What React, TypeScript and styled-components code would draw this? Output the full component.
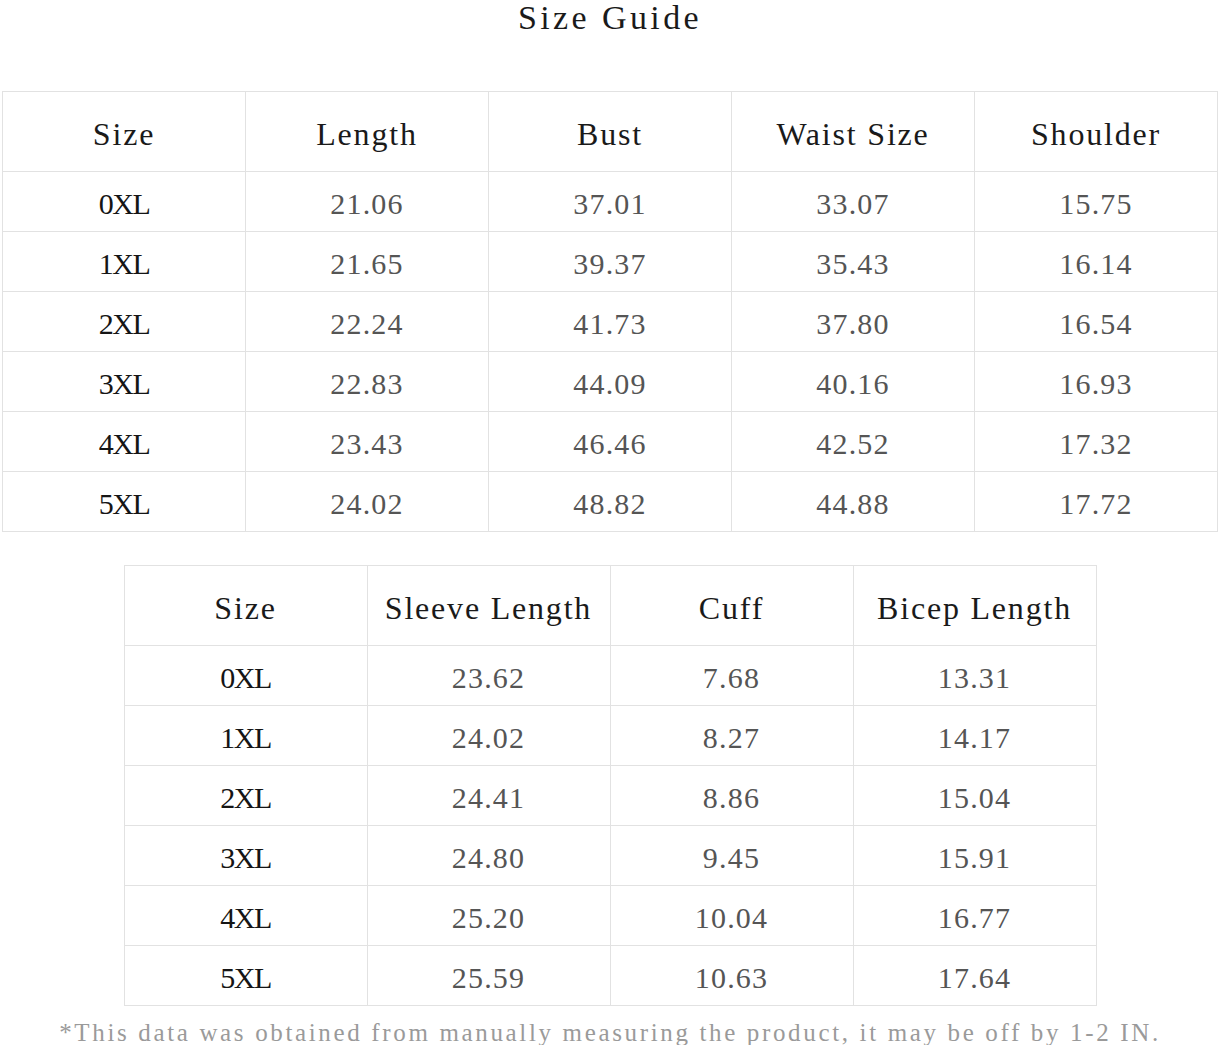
import React from "react";
import styled, { createGlobalStyle } from "styled-components";

const Global = createGlobalStyle`
  html, body { margin: 0; padding: 0; background: #ffffff; }
  body { font-family: "Liberation Serif", "Noto Sans CJK SC", serif; color: #222; }
`;

const Page = styled.div`
  width: 1220px;
  display: flex;
  flex-direction: column;
  align-items: center;
`;

const Title = styled.h1`
  margin: 0;
  height: 36px;
  line-height: 36px;
  font-size: 34px;
  font-weight: 400;
  letter-spacing: 3.4px;
  color: #1a1a1a;
`;

const Table = styled.table<{ $top: number }>`
  margin-top: ${(p) => p.$top}px;
  border-collapse: collapse;
  table-layout: fixed;
`;

const HeadCell = styled.th`
  width: 242px;
  height: 75px;
  padding: 4px 0 0;
  border: 1px solid #e2e2e2;
  font-size: 32px;
  line-height: 36px;
  font-weight: 400;
  letter-spacing: 1.8px;
  color: #1a1a1a;
  text-align: center;
  vertical-align: middle;
  white-space: nowrap;
`;

const Cell = styled.td<{ $label?: boolean }>`
  width: 242px;
  height: 55px;
  padding: 4px 0 0;
  border: 1px solid #e2e2e2;
  font-size: 30px;
  line-height: 34px;
  font-weight: 400;
  letter-spacing: ${(p) => (p.$label ? "-1.5px" : "1.2px")};
  color: ${(p) => (p.$label ? "#151515" : "#555")};
  text-align: center;
  vertical-align: middle;
  white-space: nowrap;
`;

const Note = styled.p`
  margin: 14px 0 0;
  font-size: 25px;
  line-height: 26px;
  letter-spacing: 2.65px;
  color: #9a9a9a;
  white-space: nowrap;
`;

type TableData = { head: string[]; rows: string[][] };

const body: TableData = {
  head: ["Size", "Length", "Bust", "Waist Size", "Shoulder"],
  rows: [
    ["0XL", "21.06", "37.01", "33.07", "15.75"],
    ["1XL", "21.65", "39.37", "35.43", "16.14"],
    ["2XL", "22.24", "41.73", "37.80", "16.54"],
    ["3XL", "22.83", "44.09", "40.16", "16.93"],
    ["4XL", "23.43", "46.46", "42.52", "17.32"],
    ["5XL", "24.02", "48.82", "44.88", "17.72"],
  ],
};

const sleeve: TableData = {
  head: ["Size", "Sleeve Length", "Cuff", "Bicep Length"],
  rows: [
    ["0XL", "23.62", "7.68", "13.31"],
    ["1XL", "24.02", "8.27", "14.17"],
    ["2XL", "24.41", "8.86", "15.04"],
    ["3XL", "24.80", "9.45", "15.91"],
    ["4XL", "25.20", "10.04", "16.77"],
    ["5XL", "25.59", "10.63", "17.64"],
  ],
};

function SizeTable({ data, top }: { data: TableData; top: number }) {
  return (
    <Table $top={top}>
      <thead>
        <tr>
          {data.head.map((h) => (
            <HeadCell key={h}>{h}</HeadCell>
          ))}
        </tr>
      </thead>
      <tbody>
        {data.rows.map((r) => (
          <tr key={r[0]}>
            {r.map((c, i) => (
              <Cell key={i} $label={i === 0}>
                {c}
              </Cell>
            ))}
          </tr>
        ))}
      </tbody>
    </Table>
  );
}

export default function App() {
  return (
    <>
      <Global />
      <Page>
        <Title>Size Guide</Title>
        <SizeTable data={body} top={55} />
        <SizeTable data={sleeve} top={33} />
        <Note>*This data was obtained from manually measuring the product, it may be off by 1-2 IN.</Note>
      </Page>
    </>
  );
}
